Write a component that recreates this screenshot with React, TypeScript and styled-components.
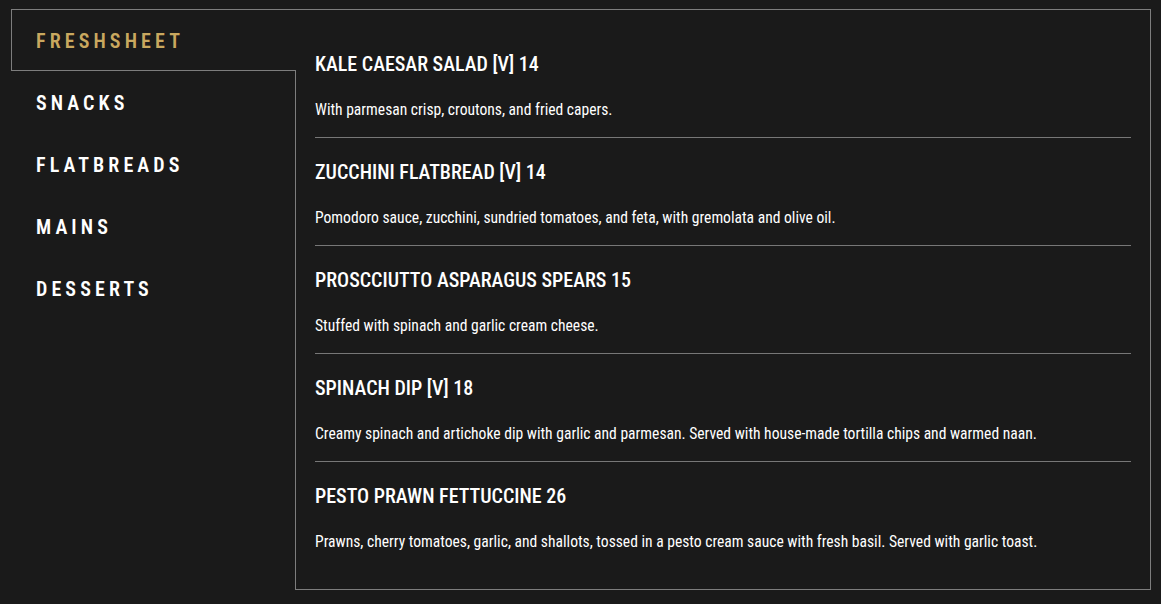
import { useState } from "react";
import styled, { createGlobalStyle } from "styled-components";

const MENU_TABS = ["FRESHSHEET", "SNACKS", "FLATBREADS", "MAINS", "DESSERTS"];

const FRESHSHEET_ITEMS = [
  {
    title: "KALE CAESAR SALAD [V] 14",
    description: "With parmesan crisp, croutons, and fried capers.",
  },
  {
    title: "ZUCCHINI FLATBREAD [V] 14",
    description: "Pomodoro sauce, zucchini, sundried tomatoes, and feta, with gremolata and olive oil.",
  },
  {
    title: "PROSCCIUTTO ASPARAGUS SPEARS 15",
    description: "Stuffed with spinach and garlic cream cheese.",
  },
  {
    title: "SPINACH DIP [V] 18",
    description: "Creamy spinach and artichoke dip with garlic and parmesan. Served with house-made tortilla chips and warmed naan.",
  },
  {
    title: "PESTO PRAWN FETTUCCINE 26",
    description:
      "Prawns, cherry tomatoes, garlic, and shallots, tossed in a pesto cream sauce with fresh basil. Served with garlic toast.",
  },
];

const GlobalStyle = createGlobalStyle`
  body {
    margin: 0;
    background: #1a1a1a;
    color: #ffffff;
    font-family: Roboto, "Open Sans", "Liberation Sans", sans-serif;
    font-stretch: 75%;
  }
`;

const MenuPage = () => {
  const [active, setActive] = useState(0);

  return (
    <>
      <GlobalStyle />
      <Wrapper>
        <TabList>
          {MENU_TABS.map((tab, index) => (
            <Tab key={tab} $active={index === active} onClick={() => setActive(index)}>
              {tab}
            </Tab>
          ))}
        </TabList>
        <Panel>
          {FRESHSHEET_ITEMS.map(item => (
            <Item key={item.title}>
              <ItemTitle>{item.title}</ItemTitle>
              <ItemDescription>{item.description}</ItemDescription>
            </Item>
          ))}
        </Panel>
      </Wrapper>
    </>
  );
};

const Wrapper = styled.div`
  display: grid;
  grid-template-columns: 284px 1fr;
  align-items: start;
  padding: 9px 10px 14px 11px;
`;

const TabList = styled.div`
  display: flex;
  flex-direction: column;
`;

// the active tab runs 1px over the panel so it hides the panel's left border
const Tab = styled.button<{ $active: boolean }>`
  position: relative;
  z-index: ${({ $active }) => ($active ? 1 : 0)};
  height: 62px;
  margin-right: ${({ $active }) => ($active ? "-1px" : "0")};
  padding: 2px 0 0 24px;
  display: flex;
  align-items: center;
  font-family: inherit;
  font-stretch: 75%;
  font-size: 20px;
  font-weight: 600;
  letter-spacing: 4.1px;
  text-align: left;
  color: ${({ $active }) => ($active ? "#c9a85f" : "#ffffff")};
  background: ${({ $active }) => ($active ? "#1a1a1a" : "transparent")};
  border: 1px solid ${({ $active }) => ($active ? "#7d7d7d" : "transparent")};
  border-right: none;
  cursor: pointer;
`;

const Panel = styled.div`
  display: flex;
  flex-direction: column;
  padding: 20px 19px;
  border: 1px solid #7d7d7d;
`;

const Item = styled.div`
  display: flex;
  flex-direction: column;
  gap: 22px;
  padding: 22px 0 15px;
  border-bottom: 1px solid #777777;

  &:last-child {
    border-bottom: none;
  }
`;

const ItemTitle = styled.h3`
  margin: 0;
  font-size: 20px;
  line-height: 24px;
  font-weight: 500;
  letter-spacing: 0;
  color: #ffffff;
`;

const ItemDescription = styled.p`
  margin: 0;
  font-size: 15.6px;
  line-height: 24px;
  font-weight: 400;
  color: #ffffff;
`;

export default MenuPage;
